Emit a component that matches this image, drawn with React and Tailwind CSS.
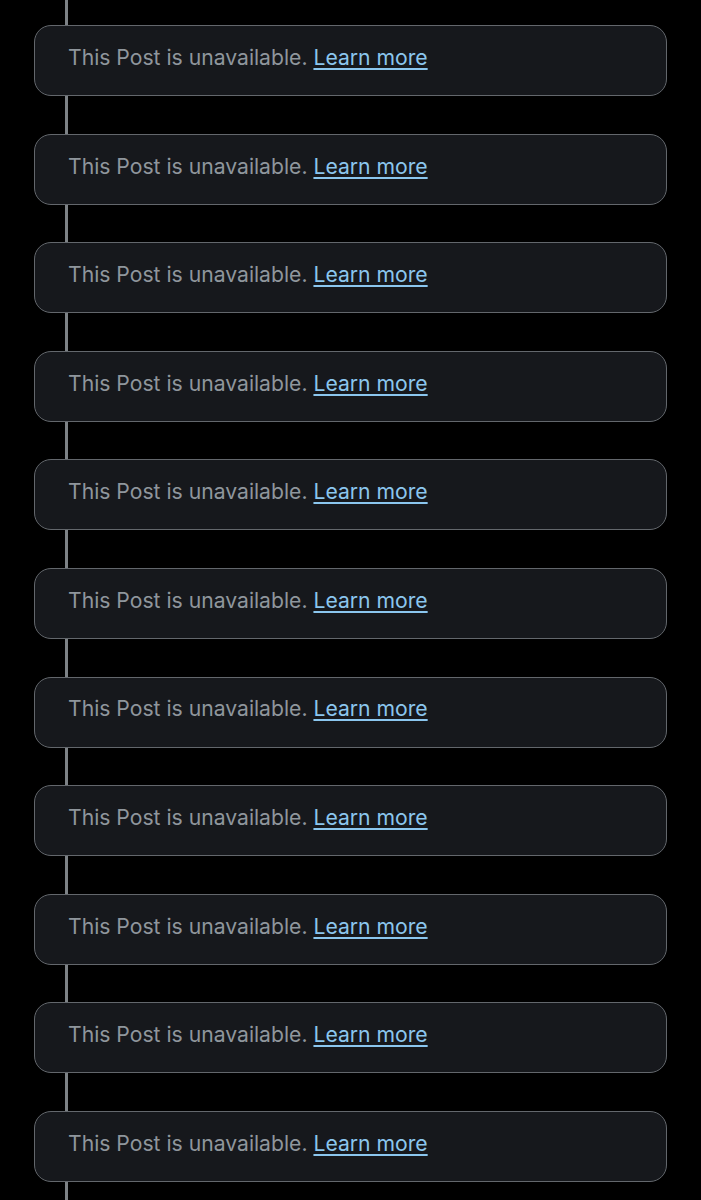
import React from 'react'

const COUNT = 11

function Connector({ h }) {
  return <div className={`ml-[65px] w-[2.5px] bg-[#7d8286] ${h}`} />
}

function UnavailablePost() {
  return (
    <div className="ml-[34px] w-[633px] h-[71px] rounded-[17px] border border-[#63676c] bg-[#16181c] flex items-center pl-[33px]">
      <p className="text-[21.15px] leading-none text-[#8f969c] font-['Inter','Liberation_Sans',sans-serif] -mt-[6px]">
        This Post is unavailable.{' '}
        <a href="#" className="text-[#8bc6ee] underline underline-offset-[3px] decoration-[1.5px]">Learn more</a>
      </p>
    </div>
  )
}

export default function App() {
  const items = Array.from({ length: COUNT }, (_, i) => i)
  return (
    <div className="w-[701px] h-[1200px] bg-black overflow-hidden">
      <Connector h="h-[25px]" />
      {items.map(i => (
        <React.Fragment key={i}>
          <UnavailablePost />
          <Connector h={i === COUNT - 1 ? "h-[40px]" : "h-[37.6px]"} />
        </React.Fragment>
      ))}
    </div>
  )
}
